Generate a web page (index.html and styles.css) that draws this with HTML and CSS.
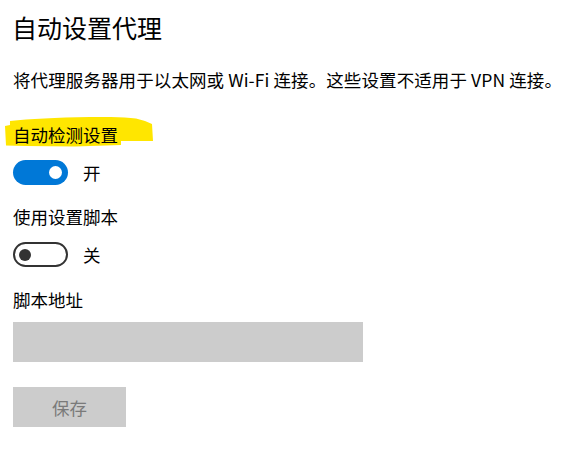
FILE: index.html
```html
<!DOCTYPE html>
<html lang="zh-CN">
<head>
<meta charset="utf-8">
<title>自动设置代理</title>
<link rel="stylesheet" href="styles.css">
</head>
<body>
<main class="page">
  <h1 class="title">自动设置代理</h1>
  <p class="desc">将代理服务器用于以太网或 Wi-Fi 连接。这些设置不适用于 VPN 连接。</p>

  <div class="label label-first">
    <svg class="marker" width="150" height="34" viewBox="0 0 150 34" aria-hidden="true">
      <path d="M5 4 C25 2 50 0.5 85 0 C105 -0.5 120 0.5 131 1.5 L140 4 L147 7 L148 24 L116 24 L116 28 L70 29.5 L20 29 L1 28.5 L0 9 L5 8 Z" fill="#ffe600"/>
    </svg>
    <span class="label-text">自动检测设置</span>
  </div>
  <div class="toggle-row toggle-row-first">
    <span class="toggle on"><span class="knob"></span></span>
    <span class="state">开</span>
  </div>

  <div class="label label-second">使用设置脚本</div>
  <div class="toggle-row">
    <span class="toggle off"><span class="knob"></span></span>
    <span class="state">关</span>
  </div>

  <div class="label label-third">脚本地址</div>
  <div class="field"></div>
  <button class="save" type="button" disabled>保存</button>
</main>
</body>
</html>
```

FILE: styles.css
```css
html, body {
  margin: 0;
  padding: 0;
  background: #ffffff;
}

body {
  font-family: "Noto Sans CJK SC", "Noto Sans", sans-serif;
  color: #000000;
}

.page {
  padding: 11px 0 0 13px;
  display: flex;
  flex-direction: column;
  align-items: flex-start;
}

.title {
  margin: 0;
  font-size: 25px;
  font-weight: 400;
  line-height: 32px;
  margin-left: -1px;
}

.desc {
  margin: 25px -13px 0 0;
  font-size: 17.5px;
  line-height: 24px;
  letter-spacing: 0.1px;
  white-space: nowrap;
  width: max-content;
}

.label {
  font-size: 17.5px;
  line-height: 24px;
  margin-top: 20px;
}

.label-first {
  position: relative;
  margin-top: 31px;
}

.marker {
  position: absolute;
  left: -8px;
  top: -6px;
  z-index: 0;
}

.label-text {
  position: relative;
  z-index: 1;
}

.label-third {
  margin-top: 21px;
}

.toggle-row {
  display: flex;
  align-items: center;
  gap: 15px;
  margin-top: 13px;
  height: 25px;
}

.toggle {
  box-sizing: border-box;
  width: 55px;
  height: 25px;
  border-radius: 13px;
  display: flex;
  align-items: center;
}

.toggle.on {
  background: #0078d7;
  justify-content: flex-end;
  padding-right: 6px;
}

.toggle.on .knob {
  width: 13px;
  height: 13px;
  border-radius: 50%;
  background: #ffffff;
}

.toggle.off {
  border: 2.5px solid #333333;
  justify-content: flex-start;
  padding-left: 4px;
}

.toggle.off .knob {
  width: 12px;
  height: 12px;
  border-radius: 50%;
  background: #333333;
}

.state {
  font-size: 17.5px;
  line-height: 24px;
}

.field {
  margin-top: 10px;
  width: 350px;
  height: 40px;
  background: #cccccc;
}

.save {
  margin-top: 25px;
  width: 113px;
  height: 40px;
  border: none;
  background: #cccccc;
  color: #7a7a7a;
  font-family: "Noto Sans CJK SC", "Noto Sans", sans-serif;
  font-size: 17.5px;
  padding: 0;
}
```
